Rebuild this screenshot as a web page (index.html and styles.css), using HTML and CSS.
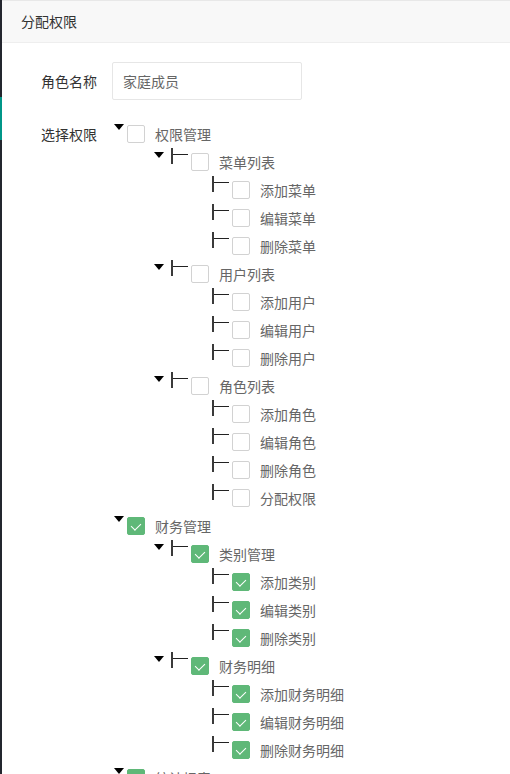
FILE: index.html
```html
<!DOCTYPE html>
<html lang="zh-CN">
<head>
<meta charset="utf-8">
<title>分配权限</title>
<link rel="stylesheet" href="styles.css">
</head>
<body>
<div class="backdrop">
  <div class="side"><div class="side-active"></div></div>
  <div class="layer">
    <div class="layer-title">分配权限</div>
    <form class="layer-content">
      <div class="form-item">
        <label class="form-label">角色名称</label>
        <div class="input-block"><input class="input" type="text" value="家庭成员"></div>
      </div>
      <div class="form-item">
        <label class="form-label label-tree">选择权限</label>
        <div class="tree">
          <div class="row lv1"><span class="caret"></span><span class="cb"></span><span class="txt">权限管理</span></div>
          <div class="row lv2"><span class="caret"></span><span class="conn"></span><span class="cb"></span><span class="txt">菜单列表</span></div>
          <div class="row lv3"><span class="conn"></span><span class="cb"></span><span class="txt">添加菜单</span></div>
          <div class="row lv3"><span class="conn"></span><span class="cb"></span><span class="txt">编辑菜单</span></div>
          <div class="row lv3"><span class="conn"></span><span class="cb"></span><span class="txt">删除菜单</span></div>
          <div class="row lv2"><span class="caret"></span><span class="conn"></span><span class="cb"></span><span class="txt">用户列表</span></div>
          <div class="row lv3"><span class="conn"></span><span class="cb"></span><span class="txt">添加用户</span></div>
          <div class="row lv3"><span class="conn"></span><span class="cb"></span><span class="txt">编辑用户</span></div>
          <div class="row lv3"><span class="conn"></span><span class="cb"></span><span class="txt">删除用户</span></div>
          <div class="row lv2"><span class="caret"></span><span class="conn"></span><span class="cb"></span><span class="txt">角色列表</span></div>
          <div class="row lv3"><span class="conn"></span><span class="cb"></span><span class="txt">添加角色</span></div>
          <div class="row lv3"><span class="conn"></span><span class="cb"></span><span class="txt">编辑角色</span></div>
          <div class="row lv3"><span class="conn"></span><span class="cb"></span><span class="txt">删除角色</span></div>
          <div class="row lv3"><span class="conn"></span><span class="cb"></span><span class="txt">分配权限</span></div>
          <div class="row lv1"><span class="caret"></span><span class="cb on"></span><span class="txt">财务管理</span></div>
          <div class="row lv2"><span class="caret"></span><span class="conn"></span><span class="cb on"></span><span class="txt">类别管理</span></div>
          <div class="row lv3"><span class="conn"></span><span class="cb on"></span><span class="txt">添加类别</span></div>
          <div class="row lv3"><span class="conn"></span><span class="cb on"></span><span class="txt">编辑类别</span></div>
          <div class="row lv3"><span class="conn"></span><span class="cb on"></span><span class="txt">删除类别</span></div>
          <div class="row lv2"><span class="caret"></span><span class="conn"></span><span class="cb on"></span><span class="txt">财务明细</span></div>
          <div class="row lv3"><span class="conn"></span><span class="cb on"></span><span class="txt">添加财务明细</span></div>
          <div class="row lv3"><span class="conn"></span><span class="cb on"></span><span class="txt">编辑财务明细</span></div>
          <div class="row lv3"><span class="conn"></span><span class="cb on"></span><span class="txt">删除财务明细</span></div>
          <div class="row lv1"><span class="caret"></span><span class="cb on"></span><span class="txt">统计报表</span></div>
          <div class="row lv2"><span class="caret"></span><span class="conn"></span><span class="cb on"></span><span class="txt">收支统计</span></div>
        </div>
      </div>
    </form>
  </div>
</div>
</body>
</html>
```

FILE: styles.css
```css
* { box-sizing: border-box; }
html, body { margin: 0; padding: 0; height: 100%; overflow: hidden; }
body {
  font-family: "Noto Sans CJK SC", "Noto Sans", "Liberation Sans", sans-serif;
  font-size: 14px;
  color: #333;
  background: #fff;
}
.backdrop { display: flex; min-height: 100%; }
.side { width: 2px; flex: none; background: #23262e; }
.side-active { margin-top: 97px; height: 43px; background: #009688; }
.layer { flex: 1; background: #fff; border-top: 1px solid #e8e8e8; }
.layer-title {
  height: 42px;
  line-height: 40px;
  padding: 0 80px 0 19px;
  background: #f8f8f8;
  border-bottom: 1px solid #eee;
  color: #333;
  font-size: 14px;
}
.layer-content { padding-top: 19px; }
.form-item { display: flex; align-items: flex-start; margin-bottom: 15px; }
.form-label {
  width: 110px;
  flex: none;
  padding: 9px 15px;
  line-height: 20px;
  text-align: right;
  color: #333;
}
.input-block { flex: none; }
.input {
  display: block;
  width: 190px;
  height: 38px;
  padding: 0 10px;
  border: 1px solid #e6e6e6;
  border-radius: 2px;
  font: inherit;
  color: #666;
  background: #fff;
  outline: none;
}
.tree { padding-top: 4px; flex: none; }
.row { display: flex; align-items: flex-start; height: 28px; }
.row.lv1 { padding-left: 2px; }
.row.lv2 { padding-left: 42px; }
.row.lv3 { padding-left: 100px; }
.caret {
  width: 0; height: 0; flex: none;
  margin-top: 5px;
  border-left: 5.5px solid transparent;
  border-right: 5.5px solid transparent;
  border-top: 6px solid #000;
}
.lv1 .caret { margin-right: 3px; }
.lv2 .caret { margin-right: 7px; }
.conn {
  position: relative;
  width: 20px; height: 16px; flex: none;
  margin-top: 1px;
  border-left: 2px solid #3a3a3a;
}
.conn::after {
  content: "";
  position: absolute;
  left: 0; top: 6px;
  width: 15px; height: 1px;
  background: #222;
}
.cb {
  position: relative;
  width: 18px; height: 18px; flex: none;
  margin-top: 6px;
  border: 1px solid #d2d2d2;
  border-radius: 2px;
  background: #fff;
}
.cb.on { background: #5fb878; border-color: #5fb878; }
.cb.on::after {
  content: "";
  position: absolute;
  left: 5px; top: 3px;
  width: 5px; height: 8px;
  border-right: 1.5px solid #fff;
  border-bottom: 1.5px solid #fff;
  transform: rotate(45deg);
}
.txt {
  margin-left: 10px;
  margin-top: 5px;
  line-height: 20px;
  color: #666;
  white-space: nowrap;
}
```
